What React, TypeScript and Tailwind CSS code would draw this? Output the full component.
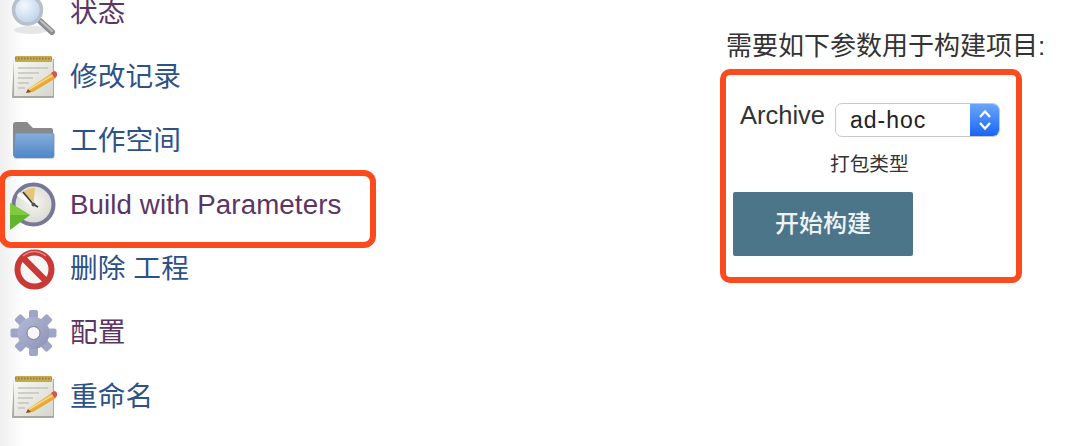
const SANS = 'font-["Liberation_Sans","Noto_Sans_CJK_SC",sans-serif]';

const NotepadIcon = ({ id }: { id: string }) => (
  <svg width="48" height="48" viewBox="0 0 48 48" className="shrink-0 overflow-visible blur-[0.6px]">
    <defs>
      <linearGradient id={id} x1="0" y1="0" x2="1" y2="1">
        <stop offset="0" stopColor="#fafaf4" />
        <stop offset="1" stopColor="#d6d6cf" />
      </linearGradient>
    </defs>
    <path d="M5 7 H45 V45 Q45 46 44 46 H4 Q3 46 3 45 Z" fill="#a9a9a3" />
    <rect x="5" y="7" width="39" height="37" fill={`url(#${id})`} />
    <rect x="6" y="4" width="37" height="6" rx="1" fill="#c5a94e" />
    <path d="M6 6.5 H43" stroke="#8f7a35" strokeWidth="1.5" strokeDasharray="1.5 1.5" />
    <path d="M9 16 H39 M9 21 H30 M9 26 H24 M9 31 H20 M9 36 H16" stroke="#c4c4be" strokeWidth="1.6" />
    <path d="M19 37 L43 21 L47 26 L24 40 L17 41 Z" fill="#e7a93a" />
    <path d="M19 38 L44 23" stroke="#f7d97f" strokeWidth="1.5" />
    <path d="M42 21 L45 19 Q47 19 48 21 L48 24 L46 26 Z" fill="#d9534f" />
    <path d="M17 41 L19 37 L22 40 Z" fill="#6b5a3a" />
  </svg>
);

const SearchIcon = () => (
  <svg width="48" height="48" viewBox="0 0 48 48" className="shrink-0 overflow-visible blur-[0.6px]">
    <defs>
      <radialGradient id="lens" cx="0.4" cy="0.35" r="0.75">
        <stop offset="0" stopColor="#f4f8fd" />
        <stop offset="1" stopColor="#b4cce8" />
      </radialGradient>
    </defs>
    <ellipse cx="22" cy="42" rx="17" ry="4" fill="#e6e6e6" />
    <path d="M31 33 L43 44" stroke="#8b8d90" strokeWidth="6" strokeLinecap="round" />
    <path d="M32 33 L43 43" stroke="#c0c2c4" strokeWidth="2" strokeLinecap="round" />
    <circle cx="18.5" cy="22" r="14" fill="url(#lens)" stroke="#b7c0cb" strokeWidth="3.5" />
  </svg>
);

const FolderIcon = () => (
  <svg width="48" height="48" viewBox="0 0 48 48" className="shrink-0 overflow-visible blur-[0.6px]">
    <defs>
      <linearGradient id="folder" x1="0" y1="0" x2="0" y2="1">
        <stop offset="0" stopColor="#86aedb" />
        <stop offset="1" stopColor="#4f86c6" />
      </linearGradient>
    </defs>
    <path d="M4 9 Q4 6 7 6 H18 L24 12 H42 Q44 12 44 14 V20 H6 V40 H4 Z" fill="#8a8a88" />
    <path d="M6 19 Q6 17 8 17 H43 Q45 17 45 19 V40 Q45 42 43 42 H7 Q5 42 5 40 Z" fill="url(#folder)" stroke="#6f8fb0" strokeWidth="0.8" />
  </svg>
);

const BuildIcon = () => (
  <svg width="48" height="48" viewBox="0 0 48 48" className="shrink-0 overflow-visible blur-[0.6px]">
    <defs>
      <radialGradient id="clock" cx="0.5" cy="0.45" r="0.6">
        <stop offset="0" stopColor="#f5f4ef" />
        <stop offset="1" stopColor="#d8d6d0" />
      </radialGradient>
    </defs>
    <circle cx="24.5" cy="24.5" r="20" fill="url(#clock)" stroke="#77779a" strokeWidth="4" />
    <path d="M24.5 24.5 L14 12 Q20 7.5 26 8 Z" fill="#e4c676" />
    <path d="M24.5 24.5 L9 14" stroke="#fafafa" strokeWidth="4" />
    <path d="M24.5 24.5 L14 12 M24.5 24.5 L29 27" stroke="#3a3a3a" strokeWidth="1.6" />
    <circle cx="24.5" cy="24.5" r="2" fill="#555" />
    <path d="M1 23 L21 35 L1 50 Z" fill="#62b32e" />
    <path d="M1 23 L21 35 L1 35 Z" fill="#7ecb3f" />
  </svg>
);

const DeleteIcon = () => (
  <svg width="48" height="48" viewBox="0 0 48 48" className="shrink-0 overflow-visible blur-[0.6px]">
    <circle cx="25.5" cy="25.5" r="17" fill="#f7f5f5" stroke="#c93a36" strokeWidth="6" />
    <path d="M14 14 L37 37" stroke="#c93a36" strokeWidth="6.5" />
    <path d="M14 12 Q25 3 37 12" fill="none" stroke="#e58a8a" strokeWidth="1.5" />
  </svg>
);

const GearIcon = () => (
  <svg width="48" height="48" viewBox="0 0 48 48" className="shrink-0 overflow-visible blur-[0.6px]">
    <defs>
      <linearGradient id="gear" x1="0" y1="0" x2="1" y2="1">
        <stop offset="0" stopColor="#b3bad8" />
        <stop offset="1" stopColor="#8e92b4" />
      </linearGradient>
    </defs>
    {[0, 45, 90, 135, 180, 225, 270, 315].map((angle) => (
      <rect key={angle} x="20" y="2" width="9" height="12" rx="2" fill="#9ea5c6" transform={`rotate(${angle} 24.5 25)`} />
    ))}
    <circle cx="24.5" cy="25" r="16" fill="url(#gear)" />
    <circle cx="24.5" cy="25" r="6.5" fill="#f7f7f7" stroke="#7d7fa3" strokeWidth="1" />
  </svg>
);

const links = [
  { icon: <SearchIcon />, label: '状态', visited: true },
  { icon: <NotepadIcon id="note-a" />, label: '修改记录', visited: false },
  { icon: <FolderIcon />, label: '工作空间', visited: false },
  { icon: <BuildIcon />, label: 'Build with Parameters', visited: true },
  { icon: <DeleteIcon />, label: '删除 工程', visited: false },
  { icon: <GearIcon />, label: '配置', visited: true },
  { icon: <NotepadIcon id="note-b" />, label: '重命名', visited: false },
];

const App = () => {
  return (
    <div className={`relative flex h-[446px] w-[1084px] overflow-hidden bg-white ${SANS}`}>
      {/* Side panel */}
      <div className="w-[726px] shrink-0 bg-[linear-gradient(to_right,#efefef,#ffffff_24px)]">
        <div className="-mt-[20px] flex flex-col pl-[9px]">
          {links.map((link) => (
            <div key={link.label} className="flex h-[64px] items-center gap-[13px]">
              {link.icon}
              <span className={`pt-[2px] text-[27.7px] leading-none tracking-[0.1px] ${link.visited ? 'text-[#5c3566]' : 'text-[#2c5287]'}`}>
                {link.label}
              </span>
            </div>
          ))}
        </div>
      </div>

      {/* Build form */}
      <div className="flex flex-col">
        <div className="mt-[31px] text-[26px] leading-[30px] text-[#333333]">需要如下参数用于构建项目:</div>
        <div className="mt-[8px] -ml-[6px] h-[214px] w-[302px] rounded-[10px] border-[6px] border-[#fc4a1f] pt-[28px] pl-[7px]">
          <div className="flex items-center pl-[7px]">
            <span className="-mt-[10px] w-[95px] text-[25.5px] leading-[34px] text-[#333333]">Archive</span>
            <div className="flex h-[34px] w-[165px] items-center overflow-hidden rounded-[7px] border border-[#c9c9c9] bg-white">
              <span className="flex-1 pl-[14px] text-[23px] tracking-[1px] text-[#222222]">ad-hoc</span>
              <div className="flex h-full w-[29px] items-center justify-center bg-[linear-gradient(to_bottom,#6aa5fb,#1a66f5)]">
                <svg width="14" height="24" viewBox="0 0 14 24" fill="none" stroke="#ffffff" strokeWidth="2.2">
                  <path d="M2 9 L7 3.5 L12 9" />
                  <path d="M2 15 L7 20.5 L12 15" />
                </svg>
              </div>
            </div>
          </div>
          <div className="mt-[14px] pl-[97px] text-[19.7px] leading-[26px] text-[#333333]">打包类型</div>
          <button className="mt-[15px] flex h-[64px] w-[180px] items-center justify-center rounded-[2px] bg-[#4d7589] text-[24px] font-medium text-[#eef3f6]">
            开始构建
          </button>
        </div>
      </div>

      {/* Annotation round the build link */}
      <div className="absolute top-[170px] -left-[1px] h-[78px] w-[377px] rounded-[12px] border-[6px] border-[#fc4a1f]" />
    </div>
  );
};

export default App;
